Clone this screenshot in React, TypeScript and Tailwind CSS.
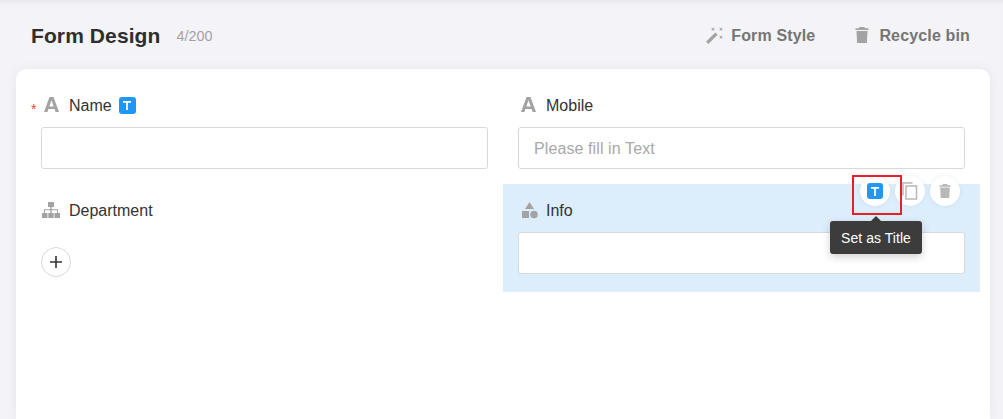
import React from 'react';

const font = { fontFamily: '"Liberation Sans", Arial, sans-serif' };

const LetterIcon = () => (
  <svg width="15" height="15" viewBox="0 0 15 15" fill="#a3a3a3">
    <path d="M5.500 0h4L15 15h-3.400l-1-2.900H4.400L3.400 15H0L5.500 0Zm-.2 9.400h4.400L7.500 3.200 5.300 9.400Z" />
  </svg>
);

const TreeIcon = () => (
  <svg width="18" height="16" viewBox="0 0 18 16" fill="#a3a3a3">
    <path d="M6 0h6v5H9.700v2.200H16V11h2v5h-5.500v-5H15V8.300H9.700V11H11.700v5H6.300v-5H8.300V8.300H3V11h2.500v5H0v-5h2V7.200h6.300V5H6V0Z" />
  </svg>
);

const ShapesIcon = () => (
  <svg width="18" height="18" viewBox="0 0 18 18" fill="#a3a3a3">
    <path d="M8.500 1 13 8H4l4.500-7Z" />
    <rect x="1" y="10" width="7" height="7" />
    <circle cx="13" cy="13.500" r="3.800" />
  </svg>
);

const TitleBadge = ({ size = 'w-[17px] h-[17px]' }: { size?: string }) => (
  <span className={`${size} rounded-[3px] bg-[#2196f3] text-white flex items-center justify-center`}>
    <svg width="8" height="9" viewBox="0 0 8 9" fill="currentColor">
      <path d="M0 0h8v1.700H4.900V9H3.100V1.700H0V0Z" />
    </svg>
  </span>
);

const TrashIcon = ({ className }: { className?: string }) => (
  <svg viewBox="0 0 13 16" fill="currentColor" className={className}>
    <path d="M4 0h5l.5 1.300H13V3H0V1.300h3.500L4 0ZM1 4h11l-.6 12H1.600L1 4Z" />
  </svg>
);

const WandIcon = () => (
  <svg width="18" height="17" viewBox="0 0 18 17" fill="#a3a3a3">
    <path d="M10.300 5.500 12.700 7.800 3.400 17 1 14.700 10.300 5.500Z" />
    <path d="M7 0.500 8 1.500 9 0.500l.6.6-1 1 1 1-.6.6-1-1-1 1-.6-.6 1-1-1-1L7 0.500ZM15 0.500l1 1 1-1 .6.6-1 1 1 1-.6.6-1-1-1 1-.6-.6 1-1-1-1 .6-.6ZM15 8.500l1 1 1-1 .6.6-1 1 1 1-.6.6-1-1-1 1-.6-.6 1-1-1-1 .6-.6Z" />
  </svg>
);

const Field = ({
  icon,
  label,
  required,
  badge,
  placeholder,
  active,
}: {
  icon: React.ReactNode;
  label: string;
  required?: boolean;
  badge?: boolean;
  placeholder?: string;
  active?: boolean;
}) => (
  <div className={`px-[15px] pt-[15px] ${active ? 'bg-[#dcedfc] pb-[18px]' : 'pb-[15px]'}`}>
    <div className="relative h-[23px] flex items-center text-base text-[#333333]">
      {required && <span className="absolute left-[-10px] top-[5px] text-sm text-[#f04438]">*</span>}
      <span className="w-[28px] flex items-center pl-[3px] pb-[2px]">{icon}</span>
      <span>{label}</span>
      {badge && (
        <span className="ml-[7px] mb-[1px]">
          <TitleBadge />
        </span>
      )}
    </div>
    <input
      readOnly
      placeholder={placeholder}
      className="mt-[10px] block w-full h-[42px] px-[15px] pt-[1px] bg-white border border-[#d9d9d9] rounded-[3px] text-base tracking-[0.1px] outline-none placeholder:text-[#a8a8a8]"
    />
  </div>
);

const circle = 'w-[30px] h-[30px] rounded-full bg-white flex items-center justify-center shadow-[0_0_5px_rgba(0,0,0,0.07)]';

export default function App() {
  return (
    <div style={font} className="h-[419px] w-[1003px] overflow-hidden bg-[#f3f3f8] shadow-[inset_0_4px_4px_-2px_rgba(0,0,0,0.06)]">
      <header className="h-[69px] pl-[31px] pr-[33px] pt-[2px] flex items-center">
        <h1 className="text-[21px] font-bold text-[#2e2e2e] tracking-[0.1px]">Form Design</h1>
        <span className="ml-4 mt-[3px] text-[14.4px] text-[#a3a3a3]">4/200</span>
        <div className="ml-auto flex items-center gap-[40px] text-base font-bold tracking-[0.15px] text-[#757575]">
          <button className="flex items-center gap-[8px]">
            <WandIcon />
            Form Style
          </button>
          <button className="flex items-center gap-[10px]">
            <TrashIcon className="w-[14px] h-[16px] text-[#a3a3a3] mb-[2px]" />
            Recycle bin
          </button>
        </div>
      </header>

      <main className="relative ml-4 w-[974px] h-[350px] bg-white rounded-t-[10px] px-[10px] pt-[10px] shadow-[0_0_12px_rgba(0,0,0,0.06)]">
        <div className="grid grid-cols-2">
          <Field icon={<LetterIcon />} label="Name" required badge />
          <Field icon={<LetterIcon />} label="Mobile" placeholder="Please fill in Text" />
          <div className="px-[15px] pt-[15px]">
            <div className="h-[23px] flex items-center text-base text-[#333333]">
              <span className="w-[28px] flex items-center pl-[1px] pb-[2px]">
                <TreeIcon />
              </span>
              Department
            </div>
            <button className="mt-[25px] w-[30px] h-[30px] rounded-full border border-[#d9d9d9] flex items-center justify-center text-[#333333]">
              <svg width="12" height="12" viewBox="0 0 12 12" fill="currentColor">
                <path d="M5.200 0h1.600v5.200H12v1.600H6.800V12H5.200V6.800H0V5.200h5.200V0Z" />
              </svg>
            </button>
          </div>
          <Field icon={<ShapesIcon />} label="Info" active />
        </div>

        {/* hover toolbar of the selected field */}
        <div className="absolute left-[844px] top-[107px] flex gap-[5px]">
          <span className={circle}>
            <TitleBadge size="w-[16px] h-[16px]" />
          </span>
          <span className={circle}>
            <svg width="16" height="18" viewBox="0 0 16 18" fill="none" stroke="#b8b8b8" strokeWidth="1.500">
              <path d="M1 13.500V1h9.500" />
              <rect x="4" y="4" width="10.500" height="13" />
            </svg>
          </span>
          <span className={circle}>
            <TrashIcon className="w-[12px] h-[14px] text-[#b8b8b8]" />
          </span>
        </div>

        <div className="absolute left-[836px] top-[106px] w-[50px] h-[40px] border-2 border-[#e8202a]" />

        <div className="absolute left-[814px] top-[147px] flex flex-col items-center">
          <span className="w-0 h-0 border-x-[5px] border-x-transparent border-b-[5px] border-b-[#3c3c3c]" />
          <div className="w-[92px] h-[33px] rounded-[3px] bg-[#3c3c3c] text-white text-sm tracking-[0.05px] flex items-center justify-center shadow-[0_3px_8px_rgba(0,0,0,0.18)]">
            Set as Title
          </div>
        </div>
      </main>
    </div>
  );
}
